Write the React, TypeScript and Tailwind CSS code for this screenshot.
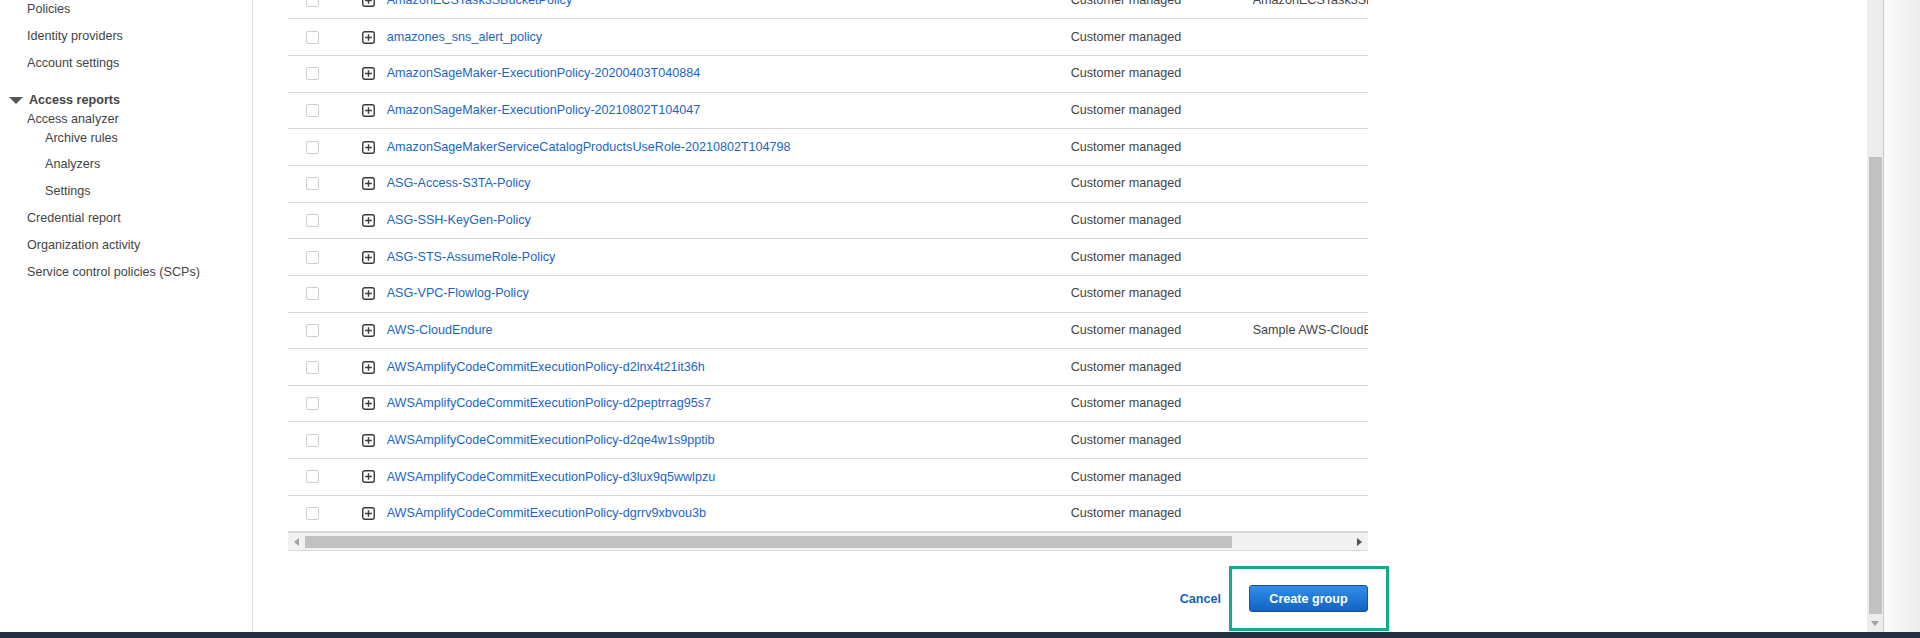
import React from "react";

type Policy = { name: string; type: string; desc?: string };

const policies: Policy[] = [
  { name: "AmazonECSTask3SBucketPolicy", type: "Customer managed", desc: "AmazonECSTask3SBucketPolicy for ECS tasks" },
  { name: "amazones_sns_alert_policy", type: "Customer managed" },
  { name: "AmazonSageMaker-ExecutionPolicy-20200403T040884", type: "Customer managed" },
  { name: "AmazonSageMaker-ExecutionPolicy-20210802T104047", type: "Customer managed" },
  { name: "AmazonSageMakerServiceCatalogProductsUseRole-20210802T104798", type: "Customer managed" },
  { name: "ASG-Access-S3TA-Policy", type: "Customer managed" },
  { name: "ASG-SSH-KeyGen-Policy", type: "Customer managed" },
  { name: "ASG-STS-AssumeRole-Policy", type: "Customer managed" },
  { name: "ASG-VPC-Flowlog-Policy", type: "Customer managed" },
  { name: "AWS-CloudEndure", type: "Customer managed", desc: "Sample AWS-CloudEndure policy" },
  { name: "AWSAmplifyCodeCommitExecutionPolicy-d2lnx4t21it36h", type: "Customer managed" },
  { name: "AWSAmplifyCodeCommitExecutionPolicy-d2peptrrag95s7", type: "Customer managed" },
  { name: "AWSAmplifyCodeCommitExecutionPolicy-d2qe4w1s9pptib", type: "Customer managed" },
  { name: "AWSAmplifyCodeCommitExecutionPolicy-d3lux9q5wwlpzu", type: "Customer managed" },
  { name: "AWSAmplifyCodeCommitExecutionPolicy-dgrrv9xbvou3b", type: "Customer managed" },
];

function ExpandIcon() {
  return (
    <svg width="13" height="13" viewBox="0 0 13 13" className="shrink-0">
      <rect x="0.75" y="0.75" width="11.5" height="11.5" rx="2" fill="white" stroke="#3a3a3a" strokeWidth="1.4" />
      <path d="M6.5 3.2v6.6M3.2 6.5h6.6" stroke="#3a3a3a" strokeWidth="1.4" />
    </svg>
  );
}

function Row({ p }: { p: Policy }) {
  return (
    <div className="flex h-[36.67px] items-center border-b border-[#d5d5d5] pl-[18px] whitespace-nowrap">
      <span className="h-[13px] w-[13px] shrink-0 rounded-[2px] border border-[#cfcfcf] bg-white" />
      <span className="ml-[43px] flex">
        <ExpandIcon />
      </span>
      <span className="ml-[11.7px] w-[684px] shrink-0 text-[#1b66c4]">{p.name}</span>
      <span className="w-[182px] shrink-0 text-[#444]">{p.type}</span>
      <span className="min-w-0 flex-1 overflow-hidden text-[#444]">{p.desc ?? ""}</span>
    </div>
  );
}

function SideItem({ children, sub = false, className = "" }: { children: React.ReactNode; sub?: boolean; className?: string }) {
  return (
    <div className={`flex items-center text-[#444] ${sub ? "pl-[45px]" : "pl-[27px]"} ${className}`}>{children}</div>
  );
}

function Sidebar() {
  return (
    <aside className="w-[253px] shrink-0 border-r border-[#dcdcdc]">
      <div className="-mt-[4px] flex flex-col">
        <SideItem className="h-[27px]">Policies</SideItem>
        <SideItem className="h-[27px]">Identity providers</SideItem>
        <SideItem className="h-[27px]">Account settings</SideItem>
        <div className="mt-[14px] flex h-[19px] items-center pl-[9px]">
          <svg width="14" height="8" viewBox="0 0 14 8" className="shrink-0">
            <polygon points="0,0 14,0 7,7" fill="#555" />
          </svg>
          <span className="ml-[6px] font-bold text-[#444]">Access reports</span>
        </div>
        <SideItem className="h-[19px]">Access analyzer</SideItem>
        <SideItem sub className="h-[18px]">Archive rules</SideItem>
        <SideItem sub className="mt-[4px] h-[27px]">Analyzers</SideItem>
        <SideItem sub className="h-[27px]">Settings</SideItem>
        <SideItem className="h-[27px]">Credential report</SideItem>
        <SideItem className="h-[27px]">Organization activity</SideItem>
        <SideItem className="h-[27px]">Service control policies (SCPs)</SideItem>
      </div>
    </aside>
  );
}

function HScrollbar() {
  return (
    <div className="flex h-[19px] items-stretch border-y border-[#dadada] bg-[#f1f1f1]">
      <div className="flex w-[17px] shrink-0 items-center justify-center">
        <svg width="5" height="8" viewBox="0 0 5 8">
          <polygon points="5,0 5,8 0,4" fill="#a3a3a3" />
        </svg>
      </div>
      <div className="flex flex-1 items-center">
        <div className="h-[12px] w-[927px] bg-[#c1c1c1]" />
      </div>
      <div className="flex w-[17px] shrink-0 items-center justify-center">
        <svg width="5" height="8" viewBox="0 0 5 8">
          <polygon points="0,0 0,8 5,4" fill="#505050" />
        </svg>
      </div>
    </div>
  );
}

function VScrollbar() {
  return (
    <div className="flex w-[17px] shrink-0 flex-col border-r border-[#c9c9c9] bg-[#ededed]">
      <div className="h-[157px]" />
      <div className="mx-auto h-[457px] w-[13px] bg-[#c1c1c1]" />
      <div className="flex flex-1 items-center justify-center">
        <svg width="8" height="5" viewBox="0 0 8 5">
          <polygon points="0,0 8,0 4,5" fill="#a3a3a3" />
        </svg>
      </div>
    </div>
  );
}

export default function App() {
  return (
    <div
      className="flex h-[638px] w-[1920px] flex-col overflow-hidden bg-white text-[12.6px] leading-none"
      style={{ fontFamily: '"Liberation Sans", Arial, sans-serif' }}
    >
      <div className="flex min-h-0 flex-1">
        <Sidebar />
        <main className="relative min-w-0 flex-1 overflow-hidden">
          <div className="-mt-[17.4px] ml-[35px] w-[1080px]">
            {policies.map((p) => (
              <Row key={p.name} p={p} />
            ))}
            <HScrollbar />
            <div className="mt-[34px] flex items-center justify-end">
              <button className="mr-[28px] font-bold text-[#1b5fb8]">Cancel</button>
              <button className="h-[27px] w-[119px] rounded-[3px] border border-[#1a5296] bg-gradient-to-b from-[#2f8fea] to-[#1463c2] font-bold text-white">
                Create group
              </button>
            </div>
          </div>
          {/* highlight frame around the primary action */}
          <div className="pointer-events-none absolute left-[976px] top-[566px] h-[65px] w-[160px] border-[3px] border-[#16a88a]" />
        </main>
        <VScrollbar />
        <div className="w-[36px] shrink-0 bg-gradient-to-r from-[#fcfcfc] to-[#ececec]" />
      </div>
      <div className="h-[6px] shrink-0 bg-[#232f3e]" />
    </div>
  );
}
